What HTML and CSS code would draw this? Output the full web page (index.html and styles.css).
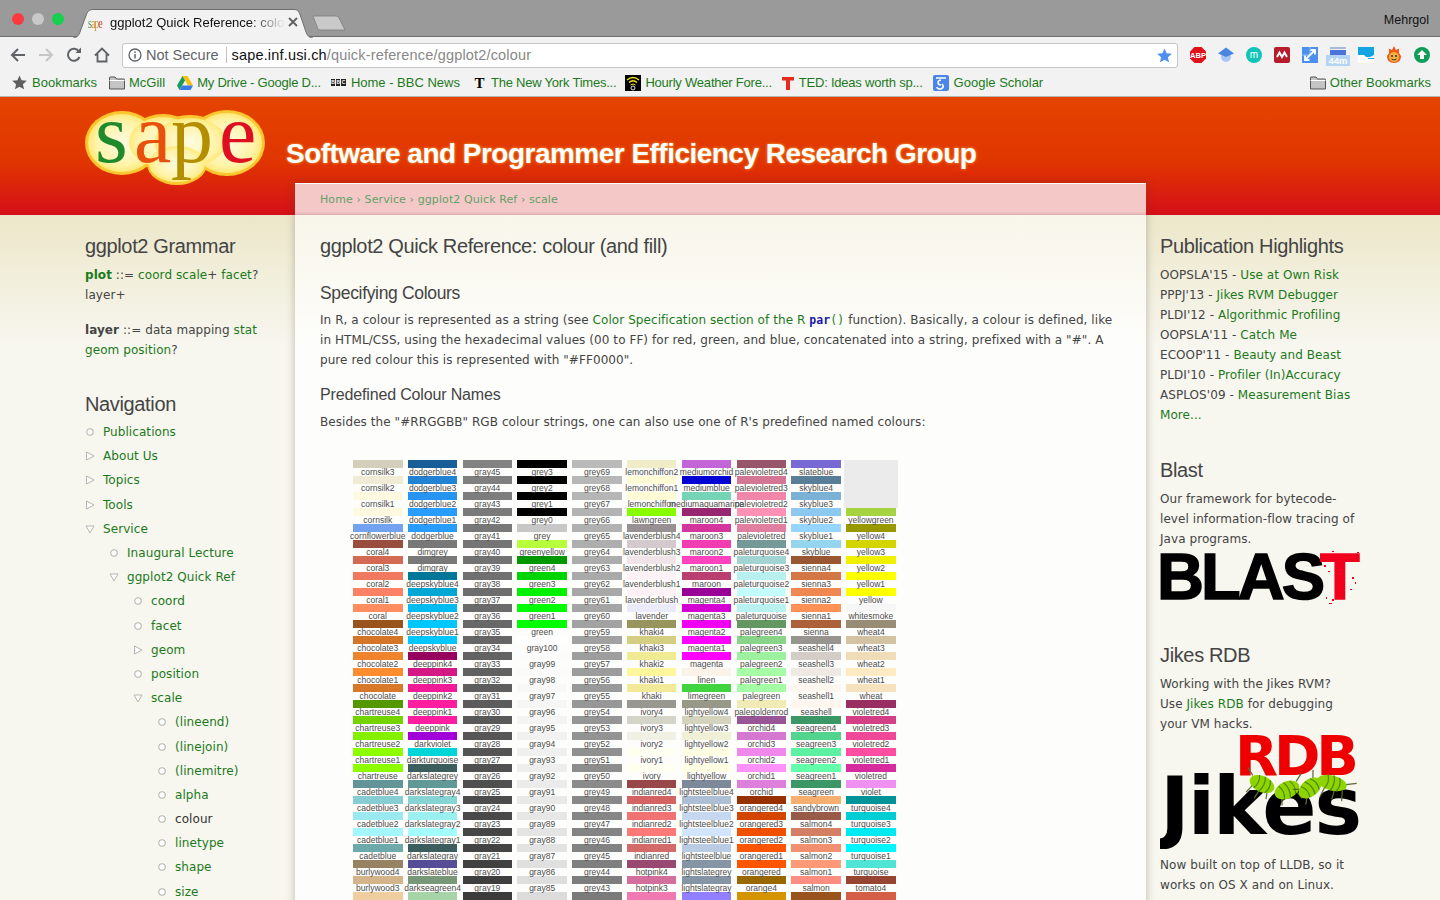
FILE: index.html
```html
<!DOCTYPE html>
<html lang="en">
<head>
  <meta charset="UTF-8">
  <title>ggplot2 Quick Reference: colour (and fill)</title>
  <link rel="stylesheet" href="styles.css">
</head>
<body>
  <svg class="defs" width="0" height="0">
    <symbol id="dot" viewBox="0 0 10 10"><circle cx="5" cy="5" r="3.2" fill="#fff" stroke="#b5b5b0" stroke-width="1.1"/></symbol>
    <symbol id="closed" viewBox="0 0 10 10"><path d="M1.5 1 L9 5 L1.5 9 Z" fill="#fff" stroke="#b5b5b0" stroke-width="1"/></symbol>
    <symbol id="open" viewBox="0 0 10 10"><path d="M1 2 L9 2 L5 9 Z" fill="#fff" stroke="#b5b5b0" stroke-width="1"/></symbol>
    <symbol id="folder" viewBox="0 0 16 14"><path d="M.5 3 V1.5 Q.5 1 1 1 H6 L7.500 3 H15 Q15.500 3 15.500 3.500 V13 H.5 Z" fill="#c4c4c4" stroke="#555"/><path d="M.5 4.500 H15.500" stroke="#fff"/></symbol>
  </svg>

  <div class="tabstrip">
    <div class="lights"><i class="light red"></i><i class="light grey"></i><i class="light green"></i></div>
    <div class="tab">
      <svg class="tab-shape" viewBox="0 0 240 29" width="240" height="29"><path d="M0 29 Q5 29 7 23 L14 4 Q15.500 .5 19 .5 H222 Q225 .5 226.500 4 L233 23 Q235 29 240 29" fill="#f2f2f2" stroke="#6e6e6e"/></svg>
      <span class="fav-sape"><b class="s1">s</b><b class="s2">a</b><b class="s3">p</b><b class="s4">e</b></span>
      <span class="tab-title">ggplot2 Quick Reference: colour (and fill)</span>
      <svg class="tab-close" viewBox="0 0 10 10" width="10" height="10"><path d="M1 1 L9 9 M9 1 L1 9" stroke="#5f5f5f" stroke-width="1.800"/></svg>
    </div>
    <svg class="newtab" viewBox="0 0 34 16" width="34" height="16"><path d="M1 1 H24 Q26 1 27 3 L33 15 H8 Q6.500 15 6 14 Z" fill="#c9c9c9" stroke="#7d7d7d" stroke-width=".8"/></svg>
    <span class="profile">Mehrgol</span>
  </div>

  <div class="toolbar">
    <svg class="nav-btn" viewBox="0 0 16 16" width="16" height="16"><path d="M15 8 H2 M8 2 L2 8 L8 14" fill="none" stroke="#5f6368" stroke-width="2"/></svg>
    <svg class="nav-btn" viewBox="0 0 16 16" width="16" height="16"><path d="M1 8 H14 M8 2 L14 8 L8 14" fill="none" stroke="#c6c6c6" stroke-width="2"/></svg>
    <svg class="nav-btn" viewBox="0 0 16 16" width="16" height="16"><path d="M13.500 10 A6 6 0 1 1 13 4.500" fill="none" stroke="#5f6368" stroke-width="2"/><path d="M9.500 6 H15 V.5 Z" fill="#5f6368"/></svg>
    <svg class="nav-btn" viewBox="0 0 16 16" width="16" height="16"><path d="M1 8.500 L8 1.500 L15 8.500 M3.500 7 V14.500 H12.500 V7" fill="none" stroke="#5f6368" stroke-width="1.800"/></svg>
    <div class="omnibox">
      <svg viewBox="0 0 14 14" width="14" height="14"><circle cx="7" cy="7" r="6" fill="none" stroke="#5f6368" stroke-width="1.300"/><path d="M7 6 V10.500 M7 3.500 V5" stroke="#5f6368" stroke-width="1.500"/></svg>
      <span class="not-secure">Not Secure</span>
      <span class="url"><b>sape.inf.usi.ch</b>/quick-reference/ggplot2/colour</span>
      <svg class="url-star" viewBox="0 0 16 16" width="15" height="15"><path d="M8 .5 L10.200 5.600 L15.800 6.100 L11.600 9.800 L12.900 15.300 L8 12.400 L3.100 15.300 L4.400 9.800 L.2 6.100 L5.800 5.600 Z" fill="#4f8ff0"/></svg>
    </div>
    <div class="extensions">
      <svg viewBox="0 0 18 18" width="18" height="18"><path d="M5.500 1 H12.500 L17 5.500 V12.500 L12.500 17 H5.500 L1 12.500 V5.500 Z" fill="#e0111b"/><text x="9" y="12" class="ext-text" font-size="7.500" text-anchor="middle">ABP</text></svg>
      <svg viewBox="0 0 18 18" width="18" height="18"><circle cx="9" cy="11" r="5" fill="#a9c7f5"/><path d="M9 1.500 L17 7.500 L9 11 L1 7.500 Z" fill="#4a86e0"/></svg>
      <svg viewBox="0 0 18 18" width="18" height="18"><circle cx="9" cy="9" r="8" fill="#10c4b8"/><text x="9" y="12" class="ext-text thin" font-size="10" text-anchor="middle">m</text></svg>
      <svg viewBox="0 0 18 18" width="18" height="18"><rect x="1" y="1" width="16" height="16" rx="2" fill="#b71c2c"/><path d="M4 11 L6.500 6.500 L9 11 L11.500 6.500 L14 11" fill="none" stroke="#fff" stroke-width="2"/></svg>
      <svg viewBox="0 0 18 18" width="18" height="18"><rect x="1" y="1" width="16" height="16" fill="#4a90f0"/><path d="M9 1 V9 H1" stroke="#8abcf8" fill="none"/><path d="M4 14 L14 4 M9.500 4 H14 V8.500 M4 9.500 V14 H8.500" fill="none" stroke="#fff" stroke-width="1.800"/></svg>
      <svg class="ext-cal" viewBox="0 0 24 20" width="24" height="20"><rect x="4" y="1" width="16" height="2" fill="#a8b8d8"/><rect x="4" y="4" width="16" height="5" fill="#4a74d8"/><rect y="9" width="24" height="11" fill="#b4d4f4"/><text x="12" y="18" class="ext-text" font-size="9.500" text-anchor="middle">44m</text></svg>
      <svg viewBox="0 0 18 18" width="18" height="18"><rect x="1" y="1" width="16" height="16" fill="#12a4e0"/><path d="M1 9 H7 L9 11 H13 L17 9 V17 H1 Z" fill="#fff"/><path d="M11 12.500 H17" stroke="#12a4e0"/></svg>
      <svg viewBox="0 0 18 18" width="18" height="18"><path d="M9 0 L11 4 L14 2.500 L14 7 L16 10 Q16 17 9 17 Q2 17 2 10 L4 7 L4 2.500 L7 4 Z" fill="#ee5a1a"/><circle cx="9" cy="11" r="5" fill="#f5b040"/><circle cx="7" cy="10" r="1" fill="#333"/><circle cx="11" cy="10" r="1" fill="#333"/><path d="M6.500 13 Q9 15 11.500 13" stroke="#333" fill="none"/></svg>
      <svg viewBox="0 0 18 18" width="18" height="18"><circle cx="9" cy="9" r="8" fill="#0f9d58"/><path d="M9 4 L14 9 H11 V13 H7 V9 H4 Z" fill="#fff"/></svg>
    </div>
  </div>

  <div class="bookmarks">
    <a class="bm bm-first"><svg viewBox="0 0 16 16" width="15" height="15"><path d="M8 .5 L10.200 5.600 L15.800 6.100 L11.600 9.800 L12.900 15.300 L8 12.400 L3.100 15.300 L4.400 9.800 L.2 6.100 L5.800 5.600 Z" fill="#5f5f5f"/></svg>Bookmarks</a>
    <a class="bm"><svg width="16" height="14"><use href="#folder"/></svg>McGill</a>
    <a class="bm cut"><svg viewBox="0 0 16 14" width="16" height="14"><path d="M5.500 0 H10.500 L16 9.500 H11 Z" fill="#f4c20d"/><path d="M5.500 0 L0 9.500 L2.500 14 L8 4.500 Z" fill="#1a9c58"/><path d="M2.500 14 H13.500 L16 9.500 H5.200 Z" fill="#3b7be8"/></svg>My Drive - Google D...</a>
    <a class="bm near"><span class="fav-bbc"><i>B</i><i>B</i><i>C</i></span>Home - BBC News</a>
    <a class="bm cut"><span class="fav-nyt">T</span>The New York Times...</a>
    <a class="bm cut tight"><svg viewBox="0 0 16 16" width="16" height="16"><rect width="16" height="16" fill="#000"/><path d="M2 5 Q8 0 14 5 M4 7.500 Q8 4 12 7.500" fill="none" stroke="#f5e020" stroke-width="1.400"/><path d="M5.500 10 Q8 8 10.500 10" fill="none" stroke="#f5e020"/><circle cx="8" cy="13" r="2" fill="none" stroke="#ddd"/></svg>Hourly Weather Fore...</a>
    <a class="bm cut tight"><svg viewBox="0 0 14 14" width="14" height="14"><path d="M1 1 H13 V4.500 H9 V14 H5 V4.500 H1 Z" fill="#e62b1e"/></svg>TED: Ideas worth sp...</a>
    <a class="bm near"><svg viewBox="0 0 16 16" width="16" height="16"><rect width="16" height="16" rx="2" fill="#4a86e8"/><path d="M3 3 H13 M8 5 A3 2.500 0 1 0 8.100 10 M9 9 Q12 12 8 14 Q4 14 4 12" fill="none" stroke="#fff" stroke-width="1.600"/></svg>Google Scholar</a>
    <a class="bm bm-other"><svg width="16" height="14"><use href="#folder"/></svg>Other Bookmarks</a>
  </div>

  <header class="site-header">
    <svg class="logo" viewBox="0 0 180 76" width="180" height="76">
      <defs>
        <radialGradient id="glow" cx="50%" cy="50%" r="55%"><stop offset="0" stop-color="#fffbe0"/><stop offset=".7" stop-color="#fff3a8"/><stop offset="1" stop-color="#ffe566"/></radialGradient>
      </defs>
      <g fill="#fbc62e">
        <ellipse cx="37" cy="33" rx="37" ry="32"/><ellipse cx="78" cy="32" rx="36" ry="28"/><ellipse cx="142" cy="33" rx="38" ry="33"/><ellipse cx="105" cy="32" rx="38" ry="27"/><ellipse cx="92" cy="54" rx="30" ry="21"/>
      </g>
      <g fill="url(#glow)">
        <ellipse cx="37" cy="33" rx="34" ry="29"/><ellipse cx="78" cy="32" rx="34" ry="25"/><ellipse cx="142" cy="33" rx="35" ry="30"/><ellipse cx="105" cy="32" rx="36" ry="24"/><ellipse cx="92" cy="54" rx="28" ry="18"/>
      </g>
      <g class="logo-text">
        <text x="10" y="52" fill="#1f8a2c">s</text>
        <text x="49" y="52" fill="#e8500e">a</text>
        <text x="86" y="52" fill="#b38f00">p</text>
        <text x="134" y="52" fill="#df0f22">e</text>
      </g>
    </svg>
    <div class="site-title">Software and Programmer Efficiency Research Group</div>
  </header>

  <div class="site-body">
    <aside class="left-side">
      <h2>ggplot2 Grammar</h2>
      <p><a><b>plot</b></a> ::= <a>coord</a> <a>scale</a>+ <a>facet</a>?<br>layer+</p>
      <p class="gap"><b>layer</b> ::= data mapping <a>stat</a><br><a>geom</a> <a>position</a>?</p>
      <h2 class="nav-head">Navigation</h2>
      <ul class="nav">
        <li><svg class="mark"><use href="#dot"/></svg><a>Publications</a></li>
        <li><svg class="mark"><use href="#closed"/></svg><a>About Us</a></li>
        <li><svg class="mark"><use href="#closed"/></svg><a>Topics</a></li>
        <li><svg class="mark"><use href="#closed"/></svg><a>Tools</a></li>
        <li><svg class="mark"><use href="#open"/></svg><a>Service</a></li>
        <ul class="nav">
          <li><svg class="mark"><use href="#dot"/></svg><a>Inaugural Lecture</a></li>
          <li><svg class="mark"><use href="#open"/></svg><a>ggplot2 Quick Ref</a></li>
          <ul class="nav">
            <li><svg class="mark"><use href="#dot"/></svg><a>coord</a></li>
            <li><svg class="mark"><use href="#dot"/></svg><a>facet</a></li>
            <li><svg class="mark"><use href="#closed"/></svg><a>geom</a></li>
            <li><svg class="mark"><use href="#dot"/></svg><a>position</a></li>
            <li><svg class="mark"><use href="#open"/></svg><a>scale</a></li>
            <ul class="nav">
              <li><svg class="mark"><use href="#dot"/></svg><a>(lineend)</a></li>
              <li><svg class="mark"><use href="#dot"/></svg><a>(linejoin)</a></li>
              <li><svg class="mark"><use href="#dot"/></svg><a>(linemitre)</a></li>
              <li><svg class="mark"><use href="#dot"/></svg><a>alpha</a></li>
              <li><svg class="mark"><use href="#dot"/></svg><span class="current">colour</span></li>
              <li><svg class="mark"><use href="#dot"/></svg><a>linetype</a></li>
              <li><svg class="mark"><use href="#dot"/></svg><a>shape</a></li>
              <li><svg class="mark"><use href="#dot"/></svg><a>size</a></li>
            </ul>
          </ul>
        </ul>
      </ul>
    </aside>

    <main class="content">
      <div class="crumbs"><a>Home</a> › <a>Service</a> › <a>ggplot2 Quick Ref</a> › <a>scale</a></div>
      <div class="article">
        <h2>ggplot2 Quick Reference: colour (and fill)</h2>
        <h3>Specifying Colours</h3>
        <p>In R, a colour is represented as a string (see <a>Color Specification section of the R <code><b>par</b>()</code></a> function). Basically, a colour is defined, like<br>in HTML/CSS, using the hexadecimal values (00 to FF) for red, green, and blue, concatenated into a string, prefixed with a "#". A<br>pure red colour this is represented with "#FF0000".</p>
        <h3 class="second">Predefined Colour Names</h3>
        <p>Besides the "#RRGGBB" RGB colour strings, one can also use one of R's predefined named colours:</p>
        <div class="colour-grid" id="colourGrid"></div>
      </div>
    </main>

    <aside class="right-side">
      <h2>Publication Highlights</h2>
      <p>OOPSLA'15 - <a>Use at Own Risk</a><br>PPPJ'13 - <a>Jikes RVM Debugger</a><br>PLDI'12 - <a>Algorithmic Profiling</a><br>OOPSLA'11 - <a>Catch Me</a><br>ECOOP'11 - <a>Beauty and Beast</a><br>PLDI'10 - <a>Profiler (In)Accuracy</a><br>ASPLOS'09 - <a>Measurement Bias</a><br><a>More...</a></p>
      <h2 class="block-head">Blast</h2>
      <p>Our framework for bytecode-<br>level information-flow tracing of<br>Java programs.</p>
      <svg class="blast" viewBox="0 0 200 54" width="200" height="54">
        <text x="-3" y="48" textLength="168" class="blast-text">BLAS</text>
        <text x="160" y="48" class="blast-text red-t">T</text>
        <g fill="#f0001c">
          <rect x="166" y="3" width="2" height="2"/><rect x="172" y="0" width="2" height="1"/><rect x="161" y="8" width="1" height="2"/><rect x="164" y="14" width="2" height="2"/><rect x="168" y="20" width="2" height="1"/><rect x="192" y="26" width="2" height="2"/><rect x="195" y="31" width="1" height="2"/><rect x="190" y="38" width="2" height="1"/><rect x="172" y="48" width="2" height="2"/><rect x="166" y="46" width="1" height="2"/><rect x="197" y="1" width="2" height="1"/><rect x="169" y="52" width="3" height="1"/>
        </g>
      </svg>
      <h2 class="block-head jikes-head">Jikes RDB</h2>
      <p>Working with the Jikes RVM?<br>Use <a>Jikes RDB</a> for debugging<br>your VM hacks.</p>
      <svg class="jikes" viewBox="0 0 200 115" width="200" height="115">
        <text x="75" y="41" textLength="124" class="rdb-text">RDB</text>
        <text x="0" y="100" textLength="202" class="jikes-text">Jikes</text>
        <g class="bug" transform="translate(102 50) rotate(25)"><path d="M-8 5 L-11 14 M0 7 L-1 16 M8 5 L10 12 M-12 -4 L-20 -9"/><ellipse rx="13" ry="8"/><path class="stripe" d="M-6 -7 Q-2 0 -6 7 M0 -8 Q4 0 0 8 M6 -7 Q10 0 6 7"/></g>
        <g class="bug" transform="translate(127 56) rotate(-25)"><path d="M-8 5 L-11 12 M8 5 L10 14 M12 -4 L20 -9"/><ellipse rx="13" ry="8.500"/><path class="stripe" d="M-6 -7 Q-2 0 -6 7 M0 -8 Q4 0 0 8 M6 -7 Q10 0 6 7"/></g>
        <g class="bug" transform="translate(150 54) rotate(-40)"><path d="M-8 -5 L-14 -10 M8 -5 L14 -12 M-8 5 L-14 10"/><ellipse rx="13" ry="8.500"/><path class="stripe" d="M-6 -7 Q-2 0 -6 7 M0 -8 Q4 0 0 8 M6 -7 Q10 0 6 7"/></g>
        <g class="bug" transform="translate(172 49) rotate(15)"><path d="M-6 6 L-8 16 M4 7 L4 16 M12 5 L14 15 M14 -2 L24 -6"/><ellipse rx="15" ry="7.500"/><path class="stripe" d="M-6 -7 Q-2 0 -6 7 M0 -8 Q4 0 0 8 M6 -7 Q10 0 6 7"/></g>
      </svg>
      <p>Now built on top of LLDB, so it<br>works on OS X and on Linux.</p>
    </aside>
  </div>

  <script src="grid.js"></script>
</body>
</html>
```

FILE: styles.css
```css
html, body {
  margin: 0;
  height: 100%;
  overflow: hidden;
}
body {
  font-family: "DejaVu Sans", sans-serif;
  font-size: 12px;
  color: #444;
  background: #f7f6ef;
}
.defs {
  display: block;
  height: 0;
}
ul {
  list-style: none;
  margin: 0;
  padding: 0;
}

/* browser chrome */
.tabstrip {
  height: 36px;
  background: #9a9a9a;
  border-bottom: 1px solid #6e6e6e;
  display: flex;
  align-items: flex-end;
  padding-left: 12px;
  position: relative;
  font-family: "Liberation Sans", sans-serif;
}
.lights {
  display: flex;
  gap: 8px;
  align-self: flex-start;
  margin-top: 13px;
  width: 61px;
}
.light {
  width: 12px;
  height: 12px;
  border-radius: 50%;
}
.light.red { background: #fb3a40; }
.light.grey { background: #c9c9c9; }
.light.green { background: #17d04e; }
.tab {
  width: 240px;
  height: 28px;
  margin-bottom: -1px;
  position: relative;
  display: flex;
  align-items: center;
  padding: 0 0 2px 15px;
  box-sizing: border-box;
}
.tab-shape {
  position: absolute;
  left: 0;
  top: 0;
}
.fav-sape {
  position: relative;
  width: 16px;
  margin-right: 6px;
  font: 10px "Liberation Serif", serif;
  letter-spacing: -1px;
  white-space: nowrap;
  transform: scaleY(1.5);
}
.fav-sape b { font-weight: normal; }
.s1 { color: #4a9a4a; }
.s2 { color: #e88040; }
.s3 { color: #b8a030; }
.s4 { color: #d84040; }
.tab-title {
  position: relative;
  width: 175px;
  font-size: 13px;
  color: #111;
  white-space: nowrap;
  overflow: hidden;
  -webkit-mask-image: linear-gradient(to right, #000 80%, transparent);
  mask-image: linear-gradient(to right, #000 80%, transparent);
}
.tab-close {
  position: relative;
  margin-left: 3px;
}
.newtab {
  align-self: flex-end;
  margin: 0 0 5px -1px;
}
.profile {
  margin-left: auto;
  margin-right: 11px;
  align-self: center;
  margin-top: 3px;
  font-size: 12.5px;
  color: #111;
}
.toolbar {
  height: 31px;
  background: #f2f2f2;
  display: flex;
  align-items: center;
  padding-left: 10px;
  box-sizing: border-box;
  padding-top: 5px;
  font-family: "Liberation Sans", sans-serif;
}
.nav-btn {
  margin-right: 12px;
  flex: none;
}
.omnibox {
  width: 1056px;
  height: 25px;
  box-sizing: border-box;
  background: #fff;
  border: 1px solid #c6c6c6;
  border-radius: 3px;
  display: flex;
  align-items: center;
  padding-left: 5px;
  font-size: 14.5px;
}
.not-secure {
  color: #5f6368;
  margin-left: 4px;
  padding-right: 7px;
  border-right: 1px solid #c0c0c0;
  line-height: 16px;
}
.url {
  margin-left: 5px;
  color: #888;
  letter-spacing: .17px;
}
.url b {
  font-weight: normal;
  color: #111;
}
.url-star {
  margin-left: auto;
  margin-right: 5px;
}
.extensions {
  flex: 1;
  display: flex;
  align-items: center;
  padding-left: 11px;
  gap: 10px;
}
.extensions .ext-cal {
  margin: 1px -3px 0;
}
.ext-text {
  font-family: "Liberation Sans", sans-serif;
  font-weight: bold;
  fill: #fff;
}
.ext-text.thin { font-weight: normal; }
.bookmarks {
  height: 28px;
  background: #f2f2f2;
  border-bottom: 1px solid #b4b4b4;
  display: flex;
  align-items: center;
  font-family: "Liberation Sans", sans-serif;
  font-size: 13px;
  color: #111;
}
.bm {
  display: flex;
  align-items: center;
  gap: 4px;
  margin-left: 12px;
  padding-top: 1px;
  white-space: nowrap;
}
.bm.cut { letter-spacing: -.22px; }
.bm.near { margin-left: 10px; gap: 5px; }
.bm.tight { margin-left: 9px; }
.bm-first {
  gap: 5px;
}
.bm-other {
  margin-left: auto;
  margin-right: 9px;
}
.fav-bbc {
  display: flex;
  gap: 1px;
  width: 15px;
}
.fav-bbc i {
  flex: none;
  width: 4.300px;
  height: 7px;
  background: #222;
  color: #fff;
  font: bold 5px/7px "Liberation Sans", sans-serif;
  text-align: center;
}
.fav-nyt {
  width: 15px;
  font: bold 15px/16px "Liberation Serif", serif;
  text-align: center;
  color: #000;
}

/* site header */
.site-header {
  height: 118px;
  background: linear-gradient(#e54400, #e03500 55%, #d50f1a);
  display: flex;
  padding: 13px 0 0 85px;
  box-sizing: border-box;
}
.logo {
  flex: none;
  overflow: visible;
}
.logo-text text {
  font-family: "Liberation Serif", serif;
  font-size: 84px;
}
.site-title {
  margin: 27px 0 0 21px;
  font: bold 28px/34px "Liberation Sans", sans-serif;
  color: #fff;
  letter-spacing: -0.52px;
  white-space: nowrap;
  text-shadow: 0 0 3px #f8b040;
}

/* three columns */
.site-body {
  display: grid;
  grid-template-columns: 295px 851px 1fr;
  letter-spacing: .07px;
}
h2 {
  font: normal 20px/24px "Liberation Sans", sans-serif;
  letter-spacing: -.36px;
  color: #444;
  margin: 0 0 7px;
}
h3 {
  font: normal 17.5px/22px "Liberation Sans", sans-serif;
  letter-spacing: -.33px;
  color: #444;
  margin: 24px 0 6px;
}
p {
  margin: 0;
  line-height: 20px;
}
a {
  color: #1c7a1c;
}
.left-side, .right-side {
  background: linear-gradient(#ece7c9, #f7f6ef 130px);
  padding-top: 19px;
}
.left-side {
  padding-left: 85px;
}
.right-side {
  padding-left: 14px;
}
.gap {
  margin-top: 15px;
}
.nav-head {
  margin: 32px 0 4px;
}
.nav .nav {
  padding-left: 24px;
}
.nav li {
  display: flex;
  align-items: center;
  height: 24.200px;
}
.mark {
  width: 10px;
  height: 10px;
  margin-right: 8px;
  flex: none;
}
.current {
  color: #333;
}

.content {
  margin-top: -32px;
  position: relative;
  box-shadow: 0 0 8px rgba(90, 70, 40, .35);
  background: #fff;
}
.crumbs {
  height: 32px;
  box-sizing: border-box;
  padding-left: 25px;
  background: #f5c8c8;
  border-top: 1px solid #fff;
  font-size: 11px;
  letter-spacing: .1px;
  line-height: 31px;
  color: #6a9a70;
  box-shadow: inset 0 -3px 3px -2px rgba(120, 60, 60, .25);
}
.crumbs a {
  color: #5fa268;
}
.article {
  padding: 19px 25px 0;
  background: linear-gradient(#f8f6ea, #fdfdfb 130px);
}
h3.second {
  font-size: 16px;
  letter-spacing: -.15px;
  margin: 14px 0 6px;
}
code {
  font: 11.500px "DejaVu Sans Mono", monospace;
}
code b {
  color: #1a1aa6;
}
.colour-grid {
  display: grid;
  grid-template-columns: repeat(10, 49.500px);
  grid-auto-rows: 16px;
  column-gap: 5.300px;
  margin: 28px 0 0 33px;
  font-family: "Liberation Sans", sans-serif;
  font-size: 8.500px;
  letter-spacing: 0;
  color: #4d4d4d;
}
.swatch {
  height: 8px;
}
.swatch-label {
  position: relative;
  z-index: 1;
  height: 8px;
  line-height: 8px;
  display: flex;
  justify-content: center;
  white-space: nowrap;
}
.panel-gap {
  grid-row: span 3;
  background: #ebebeb;
  margin: 0 -2px;
}

.block-head {
  margin: 33px 0 7px;
}
.jikes-head {
  margin-top: 38px;
}
.blast {
  display: block;
  margin-top: 2px;
}
.blast-text {
  font: bold 65px "Liberation Sans", sans-serif;
  letter-spacing: 0;
  stroke: #000;
  stroke-width: 1.500px;
}
.blast-text.red-t {
  fill: #f0001c;
  stroke: #f0001c;
}
.jikes {
  display: block;
  margin-bottom: 6px;
}
.rdb-text {
  font: bold 56px "DejaVu Sans", sans-serif;
  letter-spacing: 0;
  fill: #ee0000;
}
.jikes-text {
  font: bold 80px "DejaVu Sans", sans-serif;
  letter-spacing: 0;
  fill: #000;
}
.bug path {
  fill: none;
  stroke: #5a6a30;
  stroke-width: 1.200;
}
.bug ellipse {
  fill: #8fd400;
}
.bug .stripe {
  stroke: #4a8a00;
}
```

FILE: grid.js
```js
// named colours, one string per column, top to bottom
const columns = [
  'cornsilk3 CDC8B1,cornsilk2 EEE8CD,cornsilk1 FFF8DC,cornsilk FFF8DC,cornflowerblue 6495ED,coral4 8B3E2F,coral3 CD5B45,coral2 EE6A50,coral1 FF7256,coral FF7F50,chocolate4 8B4513,chocolate3 CD661D,chocolate2 EE7621,chocolate1 FF7F24,chocolate D2691E,chartreuse4 458B00,chartreuse3 66CD00,chartreuse2 76EE00,chartreuse1 7FFF00,chartreuse 7FFF00,cadetblue4 53868B,cadetblue3 7AC5CD,cadetblue2 8EE5EE,cadetblue1 98F5FF,cadetblue 5F9EA0,burlywood4 8B7355,burlywood3 CDAA7D,burlywood2 EEC591',
  'dodgerblue4 104E8B,dodgerblue3 1874CD,dodgerblue2 1C86EE,dodgerblue1 1E90FF,dodgerblue 1E90FF,dimgrey 696969,dimgray 696969,deepskyblue4 00688B,deepskyblue3 009ACD,deepskyblue2 00B2EE,deepskyblue1 00BFFF,deepskyblue 00BFFF,deeppink4 8B0A50,deeppink3 CD1076,deeppink2 EE1289,deeppink1 FF1493,deeppink FF1493,darkviolet 9400D3,darkturquoise 00CED1,darkslategrey 2F4F4F,darkslategray4 528B8B,darkslategray3 79CDCD,darkslategray2 8DEEEE,darkslategray1 97FFFF,darkslategray 2F4F4F,darkslateblue 483D8B,darkseagreen4 698B69,darkseagreen3 9BCD9B',
  greys('gray', 45, 18),
  'grey3 080808,grey2 050505,grey1 030303,grey0 000000,grey BEBEBE,greenyellow ADFF2F,green4 008B00,green3 00CD00,green2 00EE00,green1 00FF00,green 00FF00,' + greys('gray', 100, 84),
  greys('grey', 69, 42),
  'lemonchiffon2 EEE9BF,lemonchiffon1 FFFACD,lemonchiffon FFFACD,lawngreen 7CFC00,lavenderblush4 8B8386,lavenderblush3 CDC1C5,lavenderblush2 EEE0E5,lavenderblush1 FFF0F5,lavenderblush FFF0F5,lavender E6E6FA,khaki4 8B864E,khaki3 CDC673,khaki2 EEE685,khaki1 FFF68F,khaki F0E68C,ivory4 8B8B83,ivory3 CDCDC1,ivory2 EEEEE0,ivory1 FFFFF0,ivory FFFFF0,indianred4 8B3A3A,indianred3 CD5555,indianred2 EE6363,indianred1 FF6A6A,indianred CD5C5C,hotpink4 8B3A62,hotpink3 CD6090,hotpink2 EE6AA7',
  'mediumorchid BA55D3,mediumblue 0000CD,mediumaquamarine 66CDAA,maroon4 8B1C62,maroon3 CD2990,maroon2 EE30A7,maroon1 FF34B3,maroon B03060,magenta4 8B008B,magenta3 CD00CD,magenta2 EE00EE,magenta1 FF00FF,magenta FF00FF,linen FAF0E6,limegreen 32CD32,lightyellow4 8B8B7A,lightyellow3 CDCDB4,lightyellow2 EEEED1,lightyellow1 FFFFE0,lightyellow FFFFE0,lightsteelblue4 6E7B8B,lightsteelblue3 A2B5CD,lightsteelblue2 BCD2EE,lightsteelblue1 CAE1FF,lightsteelblue B0C4DE,lightslategrey 778899,lightslategray 778899,lightslateblue 8470FF',
  'palevioletred4 8B475D,palevioletred3 CD6889,palevioletred2 EE799F,palevioletred1 FF82AB,palevioletred DB7093,paleturquoise4 668B8B,paleturquoise3 96CDCD,paleturquoise2 AEEEEE,paleturquoise1 BBFFFF,paleturquoise AFEEEE,palegreen4 548B54,palegreen3 7CCD7C,palegreen2 90EE90,palegreen1 9AFF9A,palegreen 98FB98,palegoldenrod EEE8AA,orchid4 8B4789,orchid3 CD69C9,orchid2 EE7AE9,orchid1 FF83FA,orchid DA70D6,orangered4 8B2500,orangered3 CD3700,orangered2 EE4000,orangered1 FF4500,orangered FF4500,orange4 8B5A00,orange3 CD8500',
  'slateblue 6A5ACD,skyblue4 4A708B,skyblue3 6CA6CD,skyblue2 7EC0EE,skyblue1 87CEFF,skyblue 87CEEB,sienna4 8B4726,sienna3 CD6839,sienna2 EE7942,sienna1 FF8247,sienna A0522D,seashell4 8B8682,seashell3 CDC5BF,seashell2 EEE5DE,seashell1 FFF5EE,seashell FFF5EE,seagreen4 2E8B57,seagreen3 43CD80,seagreen2 4EEE94,seagreen1 54FF9F,seagreen 2E8B57,sandybrown F4A460,salmon4 8B4C39,salmon3 CD7054,salmon2 EE8262,salmon1 FF8C69,salmon FA8072,saddlebrown 8B4513',
  'yellowgreen 9ACD32,yellow4 8B8B00,yellow3 CDCD00,yellow2 EEEE00,yellow1 FFFF00,yellow FFFF00,whitesmoke F5F5F5,wheat4 8B7E66,wheat3 CDBA96,wheat2 EED8AE,wheat1 FFE7BA,wheat F5DEB3,violetred4 8B2252,violetred3 CD3278,violetred2 EE3A8C,violetred1 FF3E96,violetred D02090,violet EE82EE,turquoise4 00868B,turquoise3 00C5CD,turquoise2 00E5EE,turquoise1 00F5FF,turquoise 40E0D0,tomato4 8B3626,tomato3 CD4F39'
];

function greys(prefix, from, to) {
  const list = [];
  for (let n = from; n >= to; n--) {
    const hex = Math.round(n * 2.55).toString(16).padStart(2, '0').toUpperCase();
    list.push(prefix + n + ' ' + hex + hex + hex);
  }
  return list.join(',');
}

// the screenshot's display profile lifts the mid tones
function shift(hex) {
  const parts = [0, 2, 4].map(i => {
    const v = parseInt(hex.slice(i, i + 2), 16);
    return v < 12 ? 0 : Math.round(255 * Math.pow(v / 255, 0.85));
  });
  return `rgb(${parts.join(',')})`;
}

const grid = document.getElementById('colourGrid');
grid.style.gridTemplateRows = 'repeat(28, 16px)';

columns.forEach((col, c) => {
  const cells = col.split(',');
  let row = 1;
  if (cells.length < 28) {
    const gap = document.createElement('div');
    gap.className = 'panel-gap';
    gap.style.gridColumn = c + 1;
    gap.style.gridRow = '1 / span 3';
    grid.appendChild(gap);
    row = 4;
  }
  cells.forEach(cell => {
    const [name, hex] = cell.split(' ');
    const box = document.createElement('div');
    box.style.gridColumn = c + 1;
    box.style.gridRow = row++;

    const swatch = document.createElement('div');
    swatch.className = 'swatch';
    swatch.style.background = shift(hex);

    const label = document.createElement('div');
    label.className = 'swatch-label';
    label.textContent = name;

    box.appendChild(swatch);
    box.appendChild(label);
    grid.appendChild(box);
  });
});
```
